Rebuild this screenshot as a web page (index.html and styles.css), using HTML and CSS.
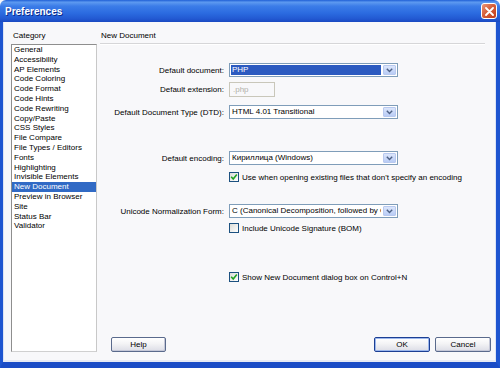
FILE: index.html
```html
<!DOCTYPE html>
<html>
<head>
<meta charset="utf-8">
<link rel="stylesheet" href="styles.css">
</head>
<body>
<div class="window">
  <div class="titlebar">
    <span class="title">Preferences</span>
    <span class="close"><svg width="9" height="9" viewBox="0 0 9 9"><path d="M1 1 L8 8 M8 1 L1 8" stroke="#fff" stroke-width="1.8" stroke-linecap="round"/></svg></span>
  </div>
  <div class="frame">
    <div class="sidebar">
      <div class="caption">Category</div>
      <ul class="list">
        <li>General</li>
        <li>Accessibility</li>
        <li>AP Elements</li>
        <li>Code Coloring</li>
        <li>Code Format</li>
        <li>Code Hints</li>
        <li>Code Rewriting</li>
        <li>Copy/Paste</li>
        <li>CSS Styles</li>
        <li>File Compare</li>
        <li>File Types / Editors</li>
        <li>Fonts</li>
        <li>Highlighting</li>
        <li>Invisible Elements</li>
        <li class="selected">New Document</li>
        <li>Preview in Browser</li>
        <li>Site</li>
        <li>Status Bar</li>
        <li>Validator</li>
      </ul>
    </div>
    <div class="panel">
      <div class="heading">New Document</div>
      <div class="separator"></div>
      <div class="form">
        <div class="row r1">
          <span class="label">Default document:</span>
          <div class="combo"><span class="value highlighted">PHP</span><span class="arrow"><svg width="7" height="5" viewBox="0 0 7 5"><path d="M0.8 0.8 L3.5 3.6 L6.2 0.8" fill="none" stroke="#4d6185" stroke-width="1.4"/></svg></span></div>
        </div>
        <div class="row r2">
          <span class="label">Default extension:</span>
          <div class="textbox">.php</div>
        </div>
        <div class="row r3">
          <span class="label">Default Document Type (DTD):</span>
          <div class="combo"><span class="value">HTML 4.01 Transitional</span><span class="arrow"><svg width="7" height="5" viewBox="0 0 7 5"><path d="M0.8 0.8 L3.5 3.6 L6.2 0.8" fill="none" stroke="#4d6185" stroke-width="1.4"/></svg></span></div>
        </div>
        <div class="row r4">
          <span class="label">Default encoding:</span>
          <div class="combo"><span class="value">Кириллица (Windows)</span><span class="arrow"><svg width="7" height="5" viewBox="0 0 7 5"><path d="M0.8 0.8 L3.5 3.6 L6.2 0.8" fill="none" stroke="#4d6185" stroke-width="1.4"/></svg></span></div>
        </div>
        <div class="row r5">
          <span class="label"></span>
          <span class="checkitem"><span class="check"><svg width="8" height="8" viewBox="0 0 8 8"><path d="M1.2 3.8 L3.2 6 L6.8 1.6" fill="none" stroke="#21a121" stroke-width="1.6"/></svg></span>Use when opening existing files that don't specify an encoding</span>
        </div>
        <div class="row r6">
          <span class="label">Unicode Normalization Form:</span>
          <div class="combo"><span class="value">C (Canonical Decomposition, followed by Canonical Composition)</span><span class="arrow"><svg width="7" height="5" viewBox="0 0 7 5"><path d="M0.8 0.8 L3.5 3.6 L6.2 0.8" fill="none" stroke="#4d6185" stroke-width="1.4"/></svg></span></div>
        </div>
        <div class="row r7">
          <span class="label"></span>
          <span class="checkitem"><span class="check"></span>Include Unicode Signature (BOM)</span>
        </div>
        <div class="row r8">
          <span class="label"></span>
          <span class="checkitem"><span class="check"><svg width="8" height="8" viewBox="0 0 8 8"><path d="M1.2 3.8 L3.2 6 L6.8 1.6" fill="none" stroke="#21a121" stroke-width="1.6"/></svg></span>Show New Document dialog box on Control+N</span>
        </div>
      </div>
      <div class="footer">
        <button class="btn help">Help</button>
        <span class="spacer"></span>
        <button class="btn default">OK</button>
        <button class="btn">Cancel</button>
      </div>
    </div>
  </div>
</div>
</body>
</html>
```

FILE: styles.css
```css
* { box-sizing: border-box; }
html, body { margin: 0; padding: 0; }
body {
  width: 500px;
  height: 368px;
  overflow: hidden;
  font-family: "Liberation Sans", Arial, sans-serif;
  font-size: 8px;
  color: #000;
  background: #f8f8fa;
}
.window {
  width: 500px;
  height: 368px;
  display: flex;
  flex-direction: column;
}
.titlebar {
  height: 22px;
  flex: none;
  display: flex;
  align-items: center;
  padding: 0 3px 0 5px;
  background: linear-gradient(#1f5fd6 0%, #5d9af0 10%, #3b7ce8 28%, #2b6be0 60%, #2259d2 85%, #1a49c2 100%);
  border-radius: 6px 6px 0 0;
}
.title {
  color: #fff;
  font-weight: bold;
  font-size: 10px;
  text-shadow: 1px 1px 0 #0a2a8a;
  padding-top: 1px;
}
.close {
  margin-left: auto;
  width: 16px;
  height: 16px;
  border: 1px solid #fff;
  border-radius: 3px;
  background: linear-gradient(135deg, #e9967a 0%, #d5603c 45%, #c03c18 100%);
  display: flex;
  align-items: center;
  justify-content: center;
}
.frame {
  flex: 1;
  display: flex;
  background: #f8f8fa;
  border-left: 3px solid #1e55d0;
  border-right: 4px solid #1e55d0;
  border-bottom: 6px solid #1a4cc6;
  box-shadow: inset 1px 0 0 #dde4f4, inset -1px 0 0 #dde4f4, inset 0 -2px 0 #e6eaf4;
  padding: 8px 5px 10px 8px;
}
.sidebar {
  width: 86px;
  display: flex;
  flex-direction: column;
}
.caption {
  line-height: 11px;
  height: 14px;
  padding-left: 2px;
}
.list {
  list-style: none;
  margin: 0;
  padding: 0;
  flex: 1;
  background: #fff;
  border: 1px solid #8e8e8e;
  border-right-color: #c8c8c8;
  border-bottom-color: #d0d0d0;
}
.list li {
  line-height: 9.8px;
  height: 9.8px;
  padding-left: 2px;
  white-space: nowrap;
}
.list li.selected {
  background: #316ac5;
  color: #fff;
}
.panel {
  flex: 1;
  margin-left: 3px;
  display: flex;
  flex-direction: column;
}
.heading {
  line-height: 11px;
  height: 13px;
  padding-left: 1px;
}
.separator {
  height: 2px;
  margin-right: 6px;
  background: #d6d6d8;
  border-bottom: 1px solid #fff;
}
.form {
  margin-top: 18px;
  display: flex;
  flex-direction: column;
}
.row {
  display: flex;
  align-items: center;
}
.label {
  width: 124px;
  flex: none;
  text-align: right;
  margin-right: 5px;
  white-space: nowrap;
}
.r1 { height: 14px; }
.r2 { height: 15px; margin-top: 5px; }
.r3 { height: 14px; margin-top: 8px; }
.r4 { height: 14px; margin-top: 32px; }
.r5 { height: 10px; margin-top: 7px; }
.r6 { height: 14px; margin-top: 22px; }
.r7 { height: 10px; margin-top: 5px; }
.r8 { height: 10px; margin-top: 39px; }
.combo {
  width: 169px;
  height: 14px;
  display: flex;
  align-items: stretch;
  background: #fff;
  border: 1px solid #7f9db9;
  padding: 1px;
}
.combo .value {
  flex: 1;
  min-width: 0;
  overflow: hidden;
  white-space: nowrap;
  line-height: 10px;
  padding-left: 1px;
  margin-right: 2px;
}
.combo .value.highlighted {
  background: #2c5ac0;
  color: #fff;
}
.combo .arrow {
  width: 13px;
  flex: none;
  display: flex;
  align-items: center;
  justify-content: center;
  background: linear-gradient(#dce6fb, #b9ccf5);
  border: 1px solid #b8c9ef;
  border-radius: 1px;
}
.textbox {
  width: 46px;
  height: 15px;
  border: 1px solid #c9c7ba;
  background: #f8f8fa;
  color: #b0b0a8;
  line-height: 13px;
  padding-left: 3px;
}
.checkitem {
  display: flex;
  align-items: center;
  white-space: nowrap;
}
.check {
  width: 10px;
  height: 10px;
  border: 1px solid #1c5180;
  background: linear-gradient(135deg, #dcdcd7, #fff);
  margin-right: 3px;
  display: flex;
  align-items: center;
  justify-content: center;
  flex: none;
}
.footer {
  margin-top: auto;
  display: flex;
  align-items: center;
  height: 15px;
}
.spacer { flex: 1; }
.btn {
  font-family: "Liberation Sans", Arial, sans-serif;
  font-size: 8px;
  color: #000;
  width: 56px;
  height: 15px;
  padding: 0;
  border: 1px solid #5a6a8c;
  border-radius: 2px;
  background: linear-gradient(#ffffff 0%, #f3f3f5 45%, #dcdde6 100%);
  box-shadow: inset -1px -1px 0 #c5c8d8;
  line-height: 13px;
}
.btn.help { margin-left: 11px; width: 55px; }
.btn.default {
  border-color: #1c3f94;
  box-shadow: inset 0 0 0 1px #9cb7ec;
  margin-right: 5px;
}
```
